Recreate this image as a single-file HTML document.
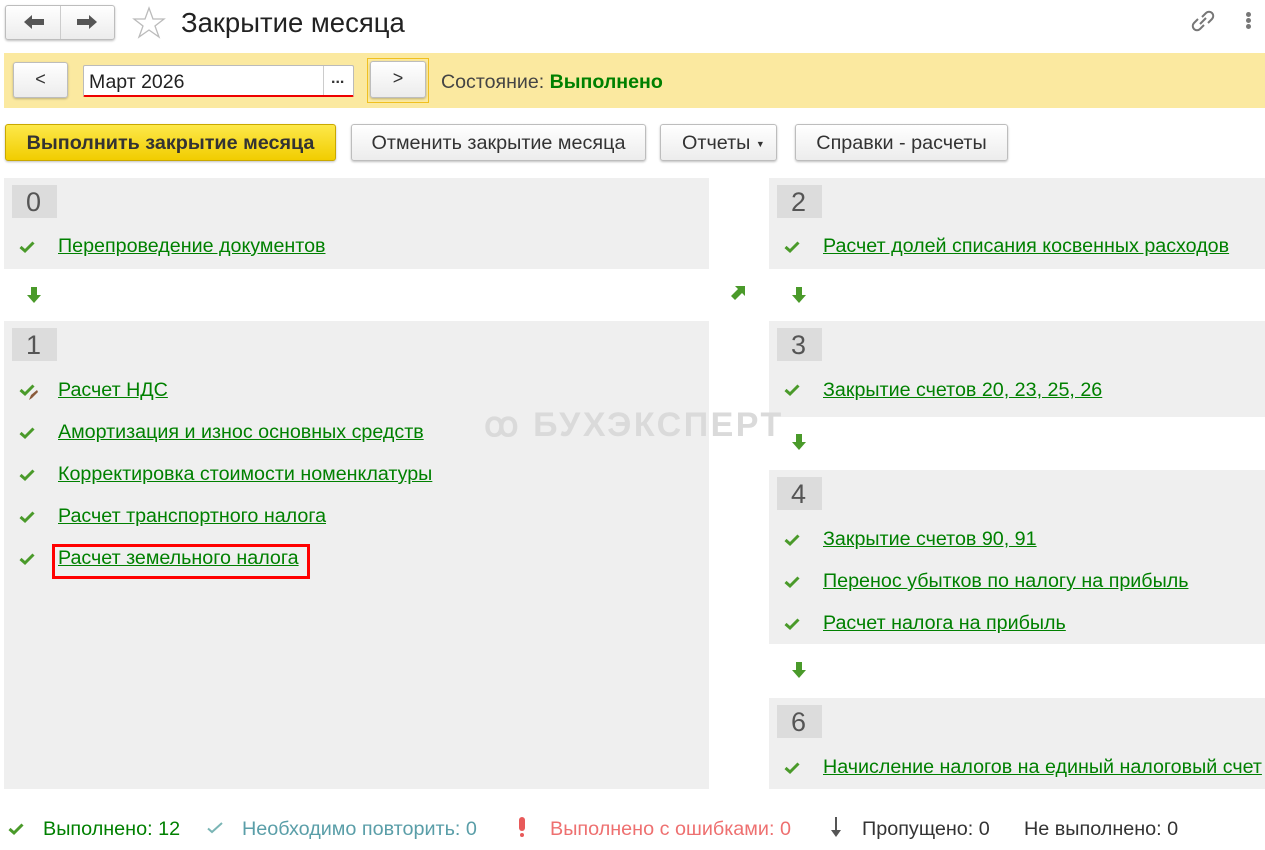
<!DOCTYPE html>
<html><head><meta charset="utf-8"><style>
*{box-sizing:border-box;margin:0;padding:0}
body{width:1265px;height:850px;background:#fff;font-family:"Liberation Sans",Arial,sans-serif;position:relative;overflow:hidden;color:#333}
.a{position:absolute}
.btn{position:absolute;border:1px solid #bdbdbd;border-radius:3px;background:linear-gradient(#fff,#ececec);box-shadow:0 1px 2px rgba(0,0,0,.25);font-size:19.8px;color:#333;text-align:center}
.panel{position:absolute;background:#efefef}
.num{position:absolute;left:8px;top:7px;width:45px;height:33px;background:#dcdcdc;color:#555;font-size:27px;line-height:34px;padding-left:14px}
.it{position:absolute;font-size:19.7px;color:#008000;text-decoration:underline;text-decoration-color:#008000;white-space:nowrap;line-height:22px}
.ck{position:absolute;width:16px;height:14px}
.ar{position:absolute;width:14px;height:18px}
.ft{position:absolute;top:818px;font-size:19.8px;line-height:22px;white-space:nowrap}
</style></head><body>
<svg width="0" height="0" style="position:absolute"><defs>
<symbol id="ck" viewBox="0 0 16 14"><path d="M1.5 7 L6 11 L14.5 2.5" fill="none" stroke="#4a9a2a" stroke-width="3"/></symbol>
<symbol id="ar" viewBox="0 0 14 18"><path d="M4 1h6v8h4l-7 8-7-8h4z" fill="#4a9a2a"/></symbol>
</defs></svg>

<!-- top -->
<div class="btn" style="left:5px;top:5px;width:110px;height:35px;"></div>
<div class="a" style="left:60px;top:6px;width:1px;height:33px;background:#ccc"></div>
<svg class="a" style="left:22px;top:13px" width="24" height="18"><path d="M2 9 L10 2 V6 H22 V12 H10 V16 Z" fill="#555"/></svg>
<svg class="a" style="left:75px;top:13px" width="24" height="18"><path d="M22 9 L14 2 V6 H2 V12 H14 V16 Z" fill="#555"/></svg>
<svg class="a" style="left:132px;top:6px" width="34" height="33"><path d="M17 2 L21 13 L32 13 L23 20 L27 31 L17 24 L7 31 L11 20 L2 13 L13 13 Z" fill="none" stroke="#bbb" stroke-width="1.3"/></svg>
<div class="a" style="left:181px;top:7px;font-size:27.5px;color:#222;">Закрытие месяца</div>
<svg class="a" style="left:1190px;top:8px" width="28" height="26"><g fill="none" stroke="#777" stroke-width="2"><path d="M12 9 L16 5 a4 4 0 0 1 6 6 L18 15"/><path d="M14 17 L10 21 a4 4 0 0 1 -6 -6 L8 11"/><path d="M10 16 L16 10"/></g></svg>
<div class="a" style="left:1246px;top:12px;width:5px;height:5px;border-radius:50%;background:#777;box-shadow:0 6px 0 #777,0 12px 0 #777"></div>

<!-- yellow bar -->
<div class="a" style="left:4px;top:53px;width:1261px;height:55px;background:#fbe9a0"></div>
<div class="btn" style="left:13px;top:62px;width:55px;height:36px;line-height:32px;font-size:18px">&lt;</div>
<div class="a" style="left:83px;top:65px;width:271px;height:32px;background:#fff;border:1px solid #bbb;border-bottom:2px solid #e00;border-radius:2px"></div>
<div class="a" style="left:89px;top:71px;font-size:19.5px;color:#222">Март 2026</div>
<div class="a" style="left:323px;top:66px;width:1px;height:29px;background:#ccc"></div>
<div class="a" style="left:331px;top:70px;font-size:16px;font-weight:bold;color:#333">...</div>
<div class="a" style="left:367px;top:58px;width:62px;height:45px;border:1px solid #f0c020"></div>
<div class="btn" style="left:370px;top:61px;width:56px;height:37px;line-height:32px;font-size:18px">&gt;</div>
<div class="a" style="left:441px;top:71px;font-size:19.6px;color:#444">Состояние: <span style="color:#008000;font-weight:bold">Выполнено</span></div>

<!-- buttons -->
<div class="btn" style="left:5px;top:124px;width:331px;height:37px;line-height:36px;background:linear-gradient(#fde84a,#f1cd00);border-color:#c9a800;font-weight:bold;color:#333">Выполнить закрытие месяца</div>
<div class="btn" style="left:351px;top:124px;width:295px;height:37px;line-height:36px">Отменить закрытие месяца</div>
<div class="btn" style="left:660px;top:124px;width:117px;height:37px;line-height:36px;text-align:left;padding-left:21px">Отчеты <span style="font-size:9px;vertical-align:middle">▼</span></div>
<div class="btn" style="left:795px;top:124px;width:213px;height:37px;line-height:36px">Справки - расчеты</div>

<!-- panels -->
<div class="panel" style="left:4px;top:178px;width:705px;height:91px"><div class="num">0</div></div>
<div class="panel" style="left:4px;top:321px;width:705px;height:468px"><div class="num">1</div></div>
<div class="panel" style="left:769px;top:178px;width:496px;height:91px"><div class="num">2</div></div>
<div class="panel" style="left:769px;top:321px;width:496px;height:96px"><div class="num">3</div></div>
<div class="panel" style="left:769px;top:470px;width:496px;height:174px"><div class="num">4</div></div>
<div class="panel" style="left:769px;top:698px;width:496px;height:91px"><div class="num">6</div></div>

<!-- watermark -->
<div class="a" style="left:484px;top:405px;font-size:34px;font-weight:bold;color:#dadada;letter-spacing:2.5px">ꝏ БУХЭКСПЕРТ</div>

<!-- left items -->
<svg class="ck" style="left:19px;top:240px"><use href="#ck"/></svg><div class="it" style="left:58px;top:235px">Перепроведение документов</div>
<svg class="ck" style="left:19px;top:383px"><use href="#ck"/></svg><svg class="a" style="left:27px;top:389px" width="12" height="12"><path d="M2 11 L4 6 L10 1 L11 3 L5 9Z" fill="#8a5a3a"/></svg><div class="it" style="left:58px;top:379px">Расчет НДС</div>
<svg class="ck" style="left:19px;top:426px"><use href="#ck"/></svg><div class="it" style="left:58px;top:421px">Амортизация и износ основных средств</div>
<svg class="ck" style="left:19px;top:468px"><use href="#ck"/></svg><div class="it" style="left:58px;top:463px">Корректировка стоимости номенклатуры</div>
<svg class="ck" style="left:19px;top:510px"><use href="#ck"/></svg><div class="it" style="left:58px;top:505px">Расчет транспортного налога</div>
<svg class="ck" style="left:19px;top:552px"><use href="#ck"/></svg><div class="it" style="left:58px;top:547px">Расчет земельного налога</div>
<div class="a" style="left:52px;top:544px;width:258px;height:35px;border:3px solid #f00"></div>

<!-- right items -->
<svg class="ck" style="left:784px;top:240px"><use href="#ck"/></svg><div class="it" style="left:823px;top:235px">Расчет долей списания косвенных расходов</div>
<svg class="ck" style="left:784px;top:383px"><use href="#ck"/></svg><div class="it" style="left:823px;top:379px">Закрытие счетов 20, 23, 25, 26</div>
<svg class="ck" style="left:784px;top:533px"><use href="#ck"/></svg><div class="it" style="left:823px;top:528px">Закрытие счетов 90, 91</div>
<svg class="ck" style="left:784px;top:575px"><use href="#ck"/></svg><div class="it" style="left:823px;top:570px">Перенос убытков по налогу на прибыль</div>
<svg class="ck" style="left:784px;top:617px"><use href="#ck"/></svg><div class="it" style="left:823px;top:612px">Расчет налога на прибыль</div>
<svg class="ck" style="left:784px;top:761px"><use href="#ck"/></svg><div class="it" style="left:823px;top:756px">Начисление налогов на единый налоговый счет</div>

<!-- arrows -->
<svg class="ar" style="left:27px;top:286px"><use href="#ar"/></svg>
<svg class="ar" style="left:792px;top:286px"><use href="#ar"/></svg>
<svg class="ar" style="left:792px;top:433px"><use href="#ar"/></svg>
<svg class="ar" style="left:792px;top:661px"><use href="#ar"/></svg>
<svg class="a" style="left:729px;top:284px" width="18" height="18"><path d="M2 12 L9 5 L6 2 L16 2 L16 12 L13 9 L6 16Z" fill="#4a9a2a"/></svg>

<!-- footer -->
<svg class="ck" style="left:8px;top:822px"><use href="#ck"/></svg>
<div class="ft" style="left:43px;color:#008000">Выполнено: 12</div>
<svg class="a" style="left:206px;top:821px" width="18" height="14"><path d="M2 7.5 L6 11 L16 2" fill="none" stroke="#7ab5b5" stroke-width="2"/></svg>
<div class="ft" style="left:242px;color:#5a9ea8">Необходимо повторить: 0</div>
<div class="a" style="left:519px;top:817px;width:6px;height:14px;background:#e85a5a;border-radius:3px"></div>
<div class="a" style="left:520px;top:833px;width:4px;height:4px;background:#e85a5a;border-radius:50%"></div>
<div class="ft" style="left:550px;color:#ee7070">Выполнено с ошибками: 0</div>
<svg class="a" style="left:829px;top:816px" width="14" height="22"><path d="M6 1h2v13h4l-5 7-5-7h4z" fill="#555"/></svg>
<div class="ft" style="left:862px;color:#333">Пропущено: 0</div>
<div class="ft" style="left:1024px;color:#333">Не выполнено: 0</div>
</body></html>
